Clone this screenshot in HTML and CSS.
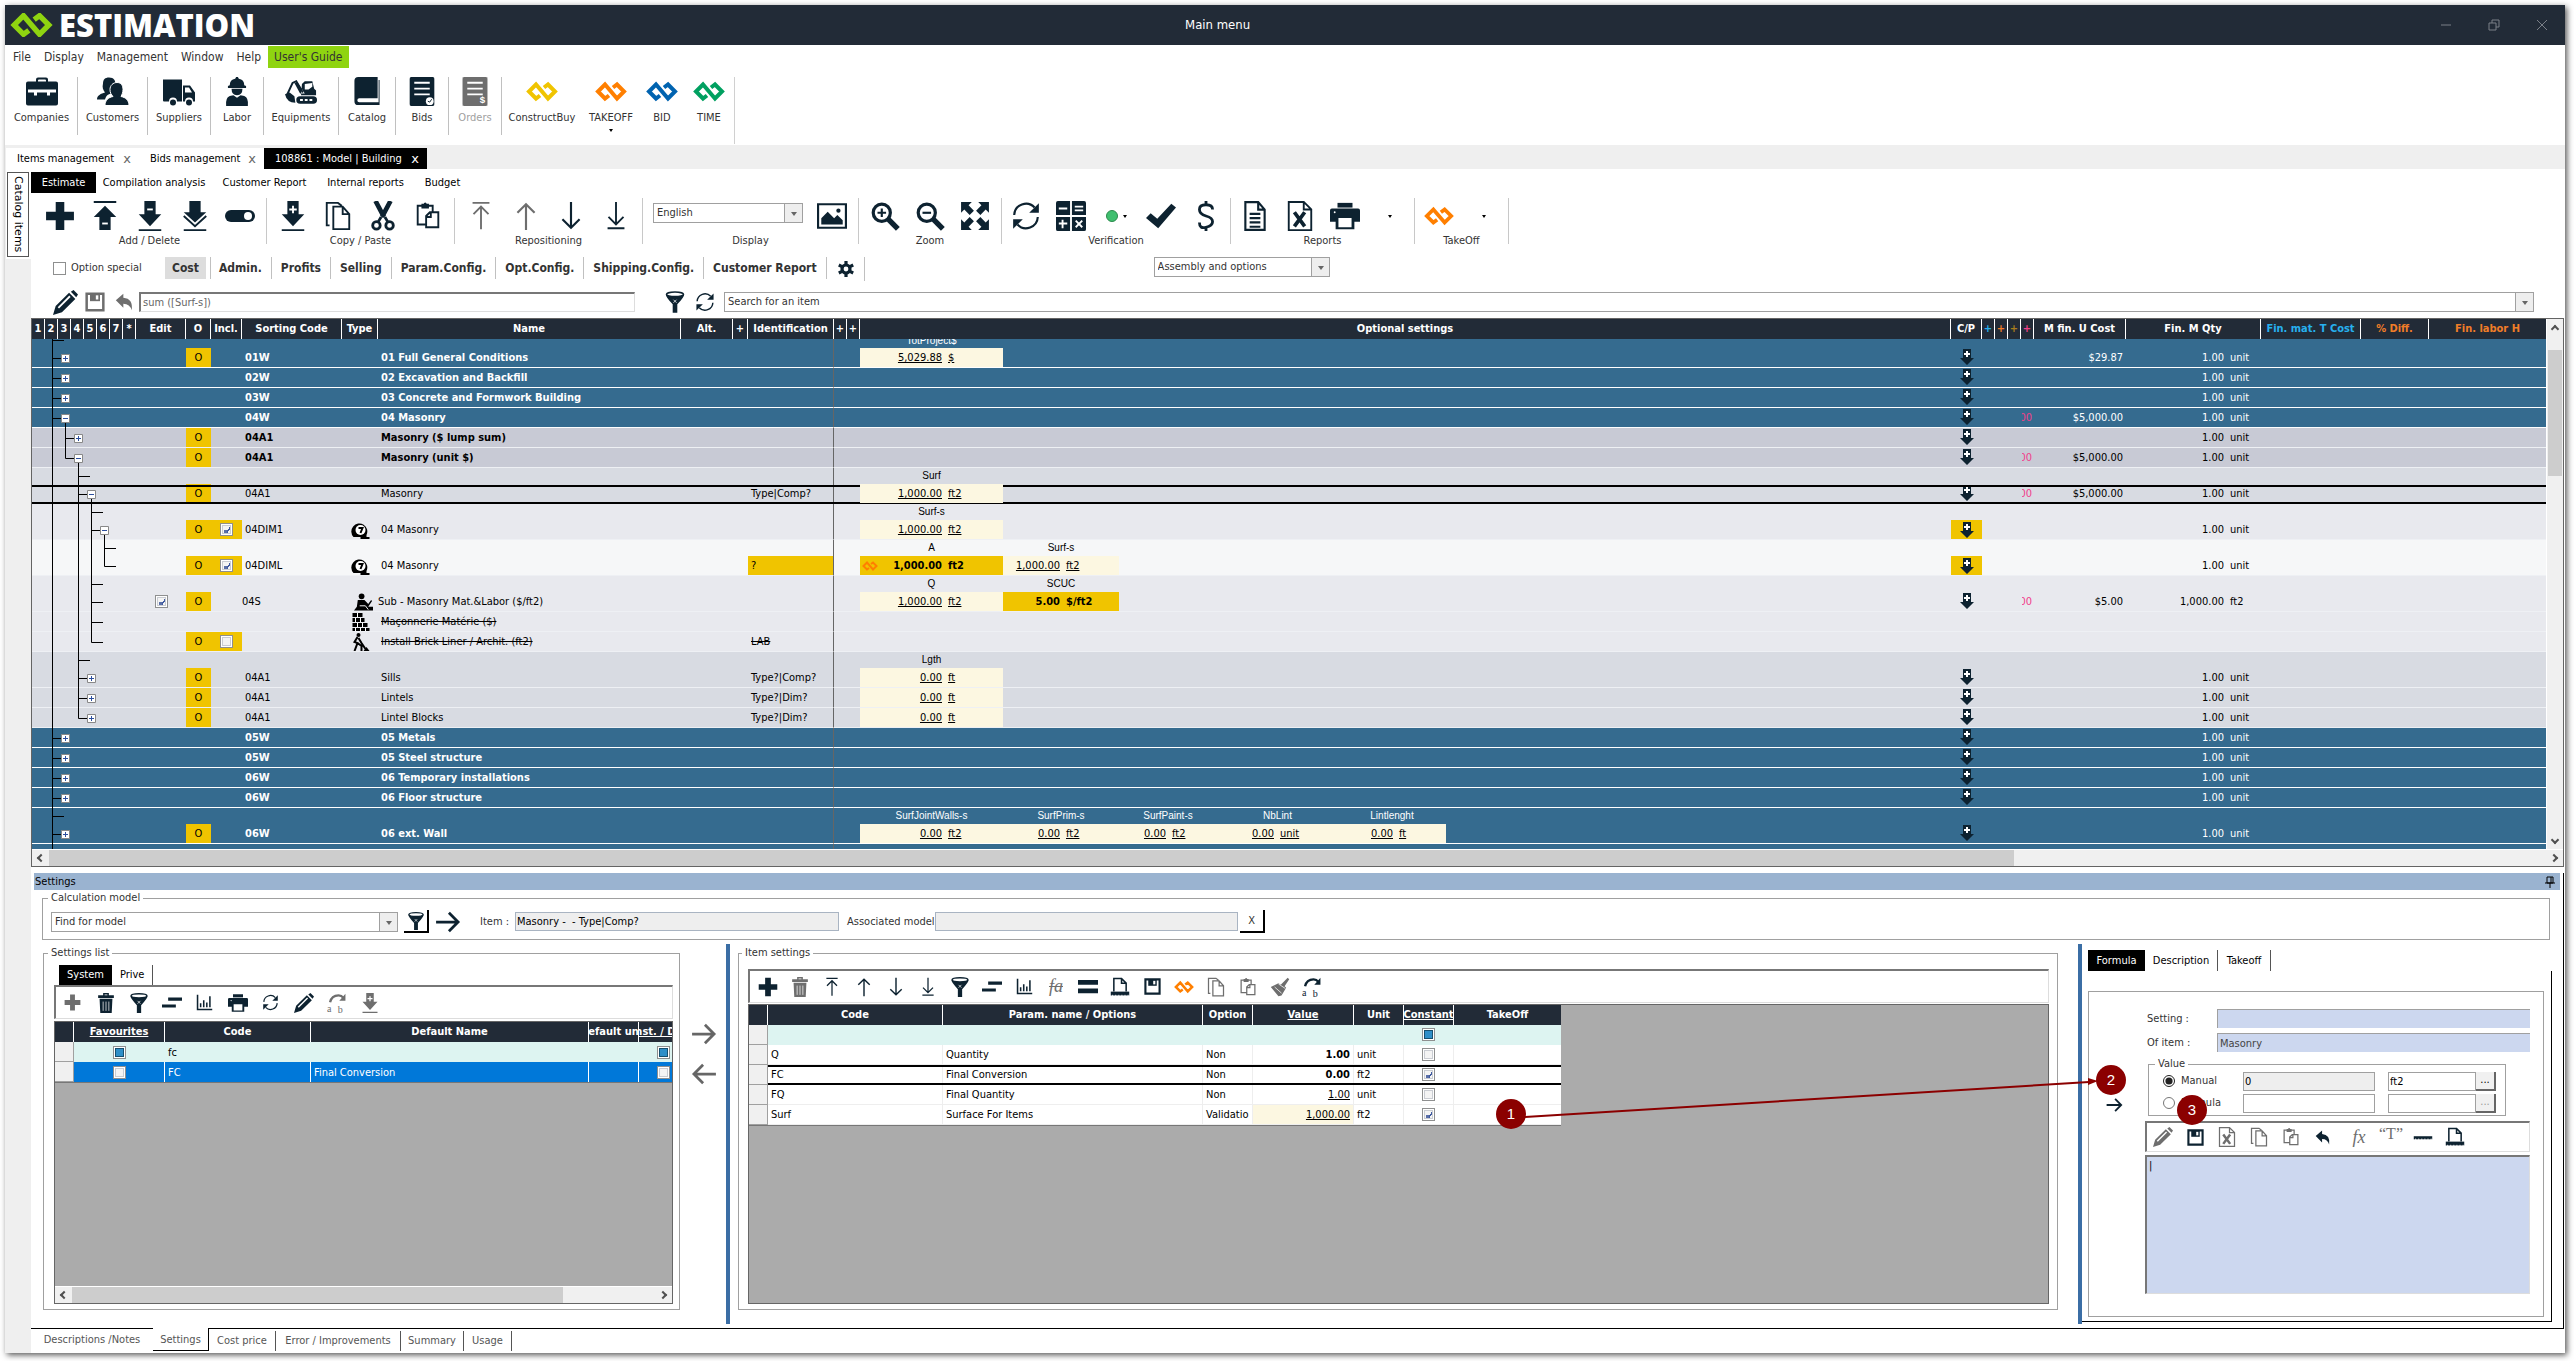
FILE: index.html
```html
<!DOCTYPE html>
<html lang="en">
<head>
<meta charset="utf-8">
<title>Estimation - Main menu</title>
<link rel="stylesheet" href="styles.css">
</head>
<body>
<svg class="defs" aria-hidden="true">
  <symbol id="knot" viewBox="0 0 32 18"><path d="M14 13l-4 3-7-7 7-7 12 14 7-7-7-7-4 3" fill="none" stroke="currentColor" stroke-width="4"/></symbol>
  <symbol id="case" viewBox="0 0 32 28"><path d="M10 5V2a2 2 0 0 1 2-2h8a2 2 0 0 1 2 2v3h-2V3q0-1-1-1h-6q-1 0-1 1v2z"/><path fill-rule="evenodd" d="M2 4h28a2 2 0 0 1 2 2v20a2 2 0 0 1-2 2H2a2 2 0 0 1-2-2V6a2 2 0 0 1 2-2zM2 12v3h6v3h3v-3h10v3h3v-3h6v-3z"/></symbol>
  <symbol id="people" viewBox="0 0 32 28"><path d="M12 0c5 0 7 3 6 8-3 1-5 4-4 8-4 1-5 3-6 6H0c0-4 4-6 8-7-2-3-3-5-2-9 0-4 2-6 6-6z"/><path d="M20 5c4 0 6 3 6 7 0 3-1 5-2 7 5 1 8 4 8 9H8c0-5 3-8 8-9-2-2-3-4-3-7 0-4 3-7 7-7z" stroke="#fff" stroke-width="1"/></symbol>
  <symbol id="truck" viewBox="0 0 32 28"><path d="M0 2h19v22H14a4 4 0 0 0-8 0H1q-1 0-1-1z"/><path fill-rule="evenodd" d="M20 8h7l5 7v9h-2a4 4 0 0 0-8 0h-2zM22 10v5h7l-3-5z"/><circle cx="10" cy="25" r="3"/><circle cx="26" cy="25" r="3"/></symbol>
  <symbol id="worker" viewBox="0 0 28 32"><path d="M6 9q0-6 6-7l1-2h2l1 2q6 1 6 7l2 1v2H4v-2zM8 13h12q0 7-6 7t-6-7zM2 32q-1-9 4-11l4-1 4 3 4-3 4 1q5 2 4 11z"/></symbol>
  <symbol id="digger" viewBox="0 0 34 26"><path d="M2 17L8 4l4-2 7 12" fill="none" stroke="currentColor" stroke-width="2"/><path fill-rule="evenodd" d="M0 16l5-2 5 4 1 7q-9 0-11-9zM10 4l3-1 8 12h-5zM18 5l3-3h8l2 8 2 2v5H17zM21 5v6h4l4-3V4z"/><path d="M16 18h14a4 4 0 0 1 0 8H16a4 4 0 0 1 0-8z"/><path d="M16 22h15" stroke="#fff" stroke-width="2" stroke-dasharray="3 2"/></symbol>
  <symbol id="book" viewBox="0 0 26 30"><path fill-rule="evenodd" d="M4 0h20v22H5q-2 0-2 2t2 2h20V3h1v26H4q-4 0-4-4V4q0-4 4-4z"/></symbol>
  <symbol id="sheet" viewBox="0 0 26 30"><rect width="26" height="30" rx="2"/><path d="M5 6h16M5 12h16M5 18h16" stroke="#fff" stroke-width="2"/></symbol>
  <symbol id="plus" viewBox="0 0 28 28"><path d="M10 1h8v9h9v8h-9v9h-8v-9H1v-8h9z"/></symbol>
  <symbol id="upbar" viewBox="0 0 28 32"><path d="M2 0h24v2H2zM14 5l12 12h-6v14H8V17H2z"/><path d="M11 24h6" stroke="#fff" stroke-width="2"/></symbol>
  <symbol id="downminus" viewBox="0 0 28 32"><path d="M8 0h12v14h6L14 27 2 14h6zM2 30h24v2H2z"/><path d="M11 9h6" stroke="#fff" stroke-width="2"/></symbol>
  <symbol id="downdouble" viewBox="0 0 28 32"><path d="M8 0h12v12h6L14 23 2 12h6zM2 30h24v2H2z"/><path d="M2 16l12 11 12-11" fill="none" stroke="currentColor" stroke-width="2"/></symbol>
  <symbol id="downplus" viewBox="0 0 28 32"><path d="M8 0h12v14h6L14 27 2 14h6zM2 30h24v2H2z"/><path d="M10 9h8M14 5v8" stroke="#fff" stroke-width="2"/></symbol>
  <symbol id="toggle" viewBox="0 0 30 12"><rect width="30" height="12" rx="6"/><circle cx="23" cy="6" r="4" fill="#fff"/></symbol>
  <symbol id="copy" viewBox="0 0 28 32"><path d="M5 26H2V2h12l4 3M9 6h10l7 8v16H9zM19 6v8h7" fill="none" stroke="currentColor" stroke-width="2"/></symbol>
  <symbol id="cut" viewBox="0 0 28 32"><path d="M6 0l9 17M22 0l-9 17" stroke="currentColor" stroke-width="5" fill="none"/><path d="M12 17l-3 5M16 17l3 5" stroke="currentColor" stroke-width="3"/><circle cx="7" cy="26" r="4" fill="none" stroke="currentColor" stroke-width="3"/><circle cx="21" cy="26" r="4" fill="none" stroke="currentColor" stroke-width="3"/></symbol>
  <symbol id="paste" viewBox="0 0 28 32"><path d="M11 25H3V5h16v6M8 7V4h2q1-3 2 0h2v3zM12 16l4-4h9v16H12zM12 17h5v-5" fill="none" stroke="currentColor" stroke-width="2"/></symbol>
  <symbol id="arrowup" viewBox="0 0 24 28"><path d="M12 27V3M4 11l8-8 8 8" fill="none" stroke="currentColor" stroke-width="2"/></symbol>
  <symbol id="arrowtop" viewBox="0 0 24 32"><path d="M3 2h18M12 30V6M4 14l8-8 8 8" fill="none" stroke="currentColor" stroke-width="2"/></symbol>
  <symbol id="arrowdown" viewBox="0 0 24 28"><path d="M12 1v24M4 17l8 8 8-8" fill="none" stroke="currentColor" stroke-width="2"/></symbol>
  <symbol id="arrowbottom" viewBox="0 0 24 32"><path d="M3 29h18M12 1v24M4 17l8 8 8-8" fill="none" stroke="currentColor" stroke-width="2"/></symbol>
  <symbol id="arrowright" viewBox="0 0 28 24"><path d="M1 12h24M15 2l10 10-10 10" fill="none" stroke="currentColor" stroke-width="3"/></symbol>
  <symbol id="arrowleft" viewBox="0 0 28 24"><path d="M27 12H3M13 2L3 12l10 10" fill="none" stroke="currentColor" stroke-width="3"/></symbol>
  <symbol id="picture" viewBox="0 0 28 24"><path fill-rule="evenodd" d="M0 0h28v24H0zM2 2v20h24V2z"/><path d="M4 20v-6l6-6 6 6 3-3 5 5v4z"/><circle cx="20" cy="7" r="2"/></symbol>
  <symbol id="lens" viewBox="0 0 28 28"><circle cx="11" cy="11" r="8" fill="none" stroke="currentColor" stroke-width="3"/><path d="M17 17l9 9" stroke="currentColor" stroke-width="5"/></symbol>
  <symbol id="zoomin" viewBox="0 0 28 28"><use href="#lens"/><path d="M7 11h8M11 7v8" stroke="currentColor" stroke-width="2"/></symbol>
  <symbol id="zoomout" viewBox="0 0 28 28"><use href="#lens"/><path d="M7 11h8" stroke="currentColor" stroke-width="2"/></symbol>
  <symbol id="expand" viewBox="0 0 28 28"><path d="M1 1h10L8 4l5 5-4 4-5-5-3 3zM27 1v10l-3-3-5 5-4-4 5-5-3-3zM1 27V17l3 3 5-5 4 4-5 5 3 3zM27 27H17l3-3-5-5 4-4 5 5 3-3z"/></symbol>
  <symbol id="refresh" viewBox="0 0 28 28"><path d="M3 13A11 11 0 0 1 22 6M25 15A11 11 0 0 1 6 22" fill="none" stroke="currentColor" stroke-width="2"/><path d="M26 2v9h-9zM2 26v-9h9z"/></symbol>
  <symbol id="calc" viewBox="0 0 32 32"><path d="M0 2q0-2 2-2h13v15H0zM17 0h13q2 0 2 2v13H17zM0 17h15v15H2q-2 0-2-2zM17 17h15v13q0 2-2 2H17z"/><path d="M3 8h9M20 6h9M20 10h9M3 24h9M7 20v9M21 21l7 7M28 21l-7 7" stroke="#fff" stroke-width="2"/></symbol>
  <symbol id="check" viewBox="0 0 32 26"><path d="M0 15l5-5 7 6L27 0l5 4-19 22z"/></symbol>
  <symbol id="dollar" viewBox="0 0 20 32"><path d="M17 9q0-5-7-5t-7 5 7 7 7 6-7 6-7-5M10 0v5M10 27v5" fill="none" stroke="currentColor" stroke-width="3"/></symbol>
  <symbol id="doc" viewBox="0 0 24 28"><path d="M3 1h12l6 7v19H3zM15 1v7h6M7 12h10M7 16h10M7 20h10M7 24h10" fill="none" stroke="currentColor" stroke-width="2"/></symbol>
  <symbol id="excel" viewBox="0 0 28 32"><path d="M2 1h16l8 8v22H2zM18 1v8h8" fill="none" stroke="currentColor" stroke-width="2"/><path d="M8 12l11 15M19 12L8 27" stroke="currentColor" stroke-width="4"/></symbol>
  <symbol id="print" viewBox="0 0 32 28"><path d="M8 0h16v5H8z"/><path fill-rule="evenodd" d="M2 6h28q2 0 2 2v12h-6v8H6v-8H0V8q0-2 2-2zM9 16v10h14V16z"/><circle cx="5" cy="10" r="1" fill="#fff"/></symbol>
  <symbol id="gear" viewBox="0 0 20 20"><circle cx="10" cy="10" r="5" fill="none" stroke="currentColor" stroke-width="4"/><path d="M10 0v4M10 16v4M1 5l4 2M15 13l4 2M1 15l4-2M15 7l4-2" stroke="currentColor" stroke-width="4"/></symbol>
  <symbol id="pencil" viewBox="0 0 28 28"><path d="M20 2l3-2 5 5-2 3zM3 18L18 3l7 7L10 25l-10 3z"/><path d="M6 20L19 7" stroke="#fff" stroke-width="2"/></symbol>
  <symbol id="save" viewBox="0 0 24 24"><path d="M2 2h20v20H2z" fill="none" stroke="currentColor" stroke-width="3"/><path d="M6 2h12v9H6z"/><path d="M13 4h3v5h-3z" fill="#fff"/></symbol>
  <symbol id="undo" viewBox="0 0 24 24"><path d="M10 2v5q12 1 10 15-2-8-10-8v5L1 10z"/></symbol>
  <symbol id="funnel" viewBox="0 0 26 28"><path d="M1 4q0 4 9 13v11h6V17q9-9 9-13z"/><ellipse cx="13" cy="4" rx="11" ry="3" fill="#fff" stroke="currentColor" stroke-width="2"/><path d="M11 11l4 4M15 11l-4 4" stroke="#fff"/></symbol>
  <symbol id="trash" viewBox="0 0 24 28"><path fill-rule="evenodd" d="M8 0h8v3h7v4H1V3h7zM10 2v1h4V2zM3 8h18l-1 20H4z"/><path d="M8 12v13M12 12v13M16 12v13" stroke="#fff"/></symbol>
  <symbol id="bars" viewBox="0 0 26 20"><path d="M8 3h18v4H8zM0 12h18v4H0z"/></symbol>
  <symbol id="chart" viewBox="0 0 22 22"><path d="M2 1v19h19M6 17v-5M10 17V8M14 17v-6M18 17V3" fill="none" stroke="currentColor" stroke-width="2"/></symbol>
  <symbol id="equal" viewBox="0 0 26 20"><path d="M0 1h26v6H0zM0 12h26v6H0z"/></symbol>
  <symbol id="ruler" viewBox="0 0 26 26"><path d="M5 19V2h10l6 6v11M15 2v6h6" fill="none" stroke="currentColor" stroke-width="2"/><path d="M1 19h24v5H1z"/><path d="M3 24h21" stroke="#fff" stroke-width="2" stroke-dasharray="1 3"/></symbol>
  <symbol id="scale" viewBox="0 0 26 26"><path d="M1 12h24v4H1z"/><path d="M3 16h21" stroke="#fff" stroke-width="2" stroke-dasharray="1 3"/></symbol>
  <symbol id="brush" viewBox="0 0 26 26"><path d="M23 1l2 2-6 9 2 2-6 10-4 1L1 13l10-5 3 2z"/><path d="M6 13l9 8M11 9l9 6" stroke="#fff"/></symbol>
  <symbol id="swap" viewBox="0 0 26 26"><path d="M4 12Q6 3 15 3q4 0 6 3" fill="none" stroke="currentColor" stroke-width="3"/><path d="M24 1v9h-8z"/></symbol>
  <symbol id="cp" viewBox="0 0 14 16"><path d="M3 0h8v9h3l-7 7-7-7h3z" fill="#0d2230"/><path d="M4 5h6M7 2v6" stroke="#fff" stroke-width="2"/></symbol>
  <symbol id="tape" viewBox="0 0 18 18"><path d="M2 16a8 8 0 1 1 13-2v2h3v2H9v-2h2M3 18h5"/><circle cx="9" cy="9" r="5" fill="#fff"/><path d="M7 7h4l-2 5" fill="none" stroke="#000" stroke-width="2"/></symbol>
  <symbol id="mason" viewBox="0 0 20 18"><circle cx="8" cy="3" r="3"/><path d="M4 7h7l4 4 3-4 1 1-4 6h5v4H0l3-4z"/><path d="M6 13h6l3 4" stroke="#fff" fill="none"/></symbol>
  <symbol id="brick" viewBox="0 0 18 18"><path d="M1 0h10v4H1zM1 5h12v4H1zM1 10h15v4H1zM1 15h17v3H1z"/><path d="M6 0v4M4 5v4M9 5v4M6 10v4M11 10v4M4 15v3M9 15v3M14 15v3" stroke="#fff"/></symbol>
  <symbol id="dig" viewBox="0 0 18 18"><circle cx="7" cy="2" r="2"/><path d="M6 4l-3 5 3 1-3 8M7 5l3 5 4 6M6 10l4 3v5" fill="none" stroke="currentColor" stroke-width="2"/><path d="M12 18l3-4 3 4z"/></symbol>
</svg>

<div class="app">
<header class="titlebar">
  <svg class="brand-mark"><use href="#knot"/></svg>
  <h1>ESTIMATION</h1>
  <span class="window-title">Main menu</span>
  <div class="window-controls">
    <button aria-label="Minimize"><svg width="12" height="12"><path d="M1 6h10"/></svg></button>
    <button aria-label="Restore"><svg width="12" height="12"><path d="M1 4h7v7H1zM4 4V1h7v7H8"/></svg></button>
    <button aria-label="Close"><svg width="12" height="12"><path d="M1 1l10 10M11 1L1 11"/></svg></button>
  </div>
</header>

<nav class="menu"><a href="#">File</a><a href="#">Display</a><a href="#">Management</a><a href="#">Window</a><a href="#">Help</a><a href="#" class="guide">User's Guide</a></nav>

<div class="ribbon">
  <button class="w72"><svg><use href="#case"/></svg>Companies</button>
  <button class="w70"><svg><use href="#people"/></svg>Customers</button>
  <button class="w63"><svg><use href="#truck"/></svg>Suppliers</button>
  <button class="w53"><svg><use href="#worker"/></svg>Labor</button>
  <button class="w75"><svg><use href="#digger"/></svg>Equipments</button>
  <button class="w57"><svg><use href="#book"/></svg>Catalog</button>
  <button class="w53"><svg viewBox="0 0 26 30"><use href="#sheet"/><circle cx="21" cy="25" r="4" fill="#fff"/><path d="M19 25l2 1 2-3" fill="none" stroke="#0d2230"/></svg>Bids</button>
  <button class="w53" disabled><svg class="shade" viewBox="0 0 26 30"><use href="#sheet"/><text x="18" y="27" class="tiny">$</text></svg>Orders</button>
  <div class="ribbon-apps">
    <button class="w80"><svg class="gold"><use href="#knot"/></svg>ConstructBuy</button>
    <button class="w58"><svg class="orange"><use href="#knot"/></svg>TAKEOFF<i class="caret"></i></button>
    <button class="w44"><svg class="blue"><use href="#knot"/></svg>BID</button>
    <button class="w50"><svg class="green"><use href="#knot"/></svg>TIME</button>
  </div>
</div>

<div class="doc-tabs">
  <div class="doc-tab t133"><a href="#">Items management</a><button aria-label="Close tab">x</button></div>
  <div class="doc-tab t125"><a href="#">Bids management</a><button aria-label="Close tab">x</button></div>
  <div class="doc-tab t163 active"><a href="#">108861 : Model | Building</a><button aria-label="Close tab">x</button></div>
</div>

<div class="body">
<aside class="gutter"><div><button>Catalog items</button></div></aside>
<main class="work">
  <nav class="sub-tabs"><a href="#" class="active t65">Estimate</a><a href="#" class="t116">Compilation analysis</a><a href="#" class="t105">Customer Report</a><a href="#" class="t97">Internal reports</a><a href="#" class="t57">Budget</a></nav>

  <div class="tools">
    <section class="g234"><div>
      <button aria-label="Add"><svg><use href="#plus"/></svg></button><button aria-label="Insert above"><svg><use href="#upbar"/></svg></button><button aria-label="Insert below"><svg><use href="#downminus"/></svg></button><button aria-label="Insert child"><svg><use href="#downdouble"/></svg></button><button aria-label="Toggle"><svg><use href="#toggle"/></svg></button></div><h2>Add / Delete</h2></section>
    <section class="g188"><div>
      <button aria-label="Import"><svg><use href="#downplus"/></svg></button><button aria-label="Copy"><svg><use href="#copy"/></svg></button><button aria-label="Cut"><svg><use href="#cut"/></svg></button><button aria-label="Paste"><svg><use href="#paste"/></svg></button></div><h2>Copy / Paste</h2></section>
    <section class="g188"><div>
      <button class="dim" aria-label="To top"><svg><use href="#arrowtop"/></svg></button><button class="dim" aria-label="Up"><svg><use href="#arrowup"/></svg></button><button aria-label="Down"><svg><use href="#arrowdown"/></svg></button><button aria-label="To bottom"><svg><use href="#arrowbottom"/></svg></button></div><h2>Repositioning</h2></section>
    <section class="g216"><div>
      <span class="select w150"><select aria-label="Language"><option>English</option></select></span><button aria-label="Picture"><svg><use href="#picture"/></svg></button></div><h2>Display</h2></section>
    <section class="g143"><div>
      <button aria-label="Zoom in"><svg><use href="#zoomin"/></svg></button><button aria-label="Zoom out"><svg><use href="#zoomout"/></svg></button><button aria-label="Fit"><svg><use href="#expand"/></svg></button></div><h2>Zoom</h2></section>
    <section class="g229"><div>
      <button aria-label="Refresh"><svg><use href="#refresh"/></svg></button><button aria-label="Calculate"><svg><use href="#calc"/></svg></button><button aria-label="Status"><i class="led"></i><i class="caret"></i></button><button aria-label="Validate"><svg><use href="#check"/></svg></button><button aria-label="Price"><svg><use href="#dollar"/></svg></button></div><h2>Verification</h2></section>
    <section class="g184"><div>
      <button aria-label="Document"><svg><use href="#doc"/></svg></button><button aria-label="Excel"><svg><use href="#excel"/></svg></button><button aria-label="Print"><svg><use href="#print"/></svg></button><button aria-label="More"><i class="caret"></i></button></div><h2>Reports</h2></section>
    <section class="g94"><div>
      <button class="orange" aria-label="TakeOff"><svg><use href="#knot"/></svg></button><button aria-label="More"><i class="caret"></i></button></div><h2>TakeOff</h2></section>
  </div>

  <div class="config">
    <label class="opt"><input type="checkbox">Option special</label>
    <nav><a href="#" class="active">Cost</a><a href="#">Admin.</a><a href="#">Profits</a><a href="#">Selling</a><a href="#">Param.Config.</a><a href="#">Opt.Config.</a><a href="#">Shipping.Config.</a><a href="#">Customer Report</a></nav>
    <button class="cog" aria-label="Configure"><svg><use href="#gear"/></svg></button>
    <span class="select w176"><select aria-label="View"><option>Assembly and options</option></select></span>
  </div>

  <div class="formula">
    <button aria-label="Edit"><svg><use href="#pencil"/></svg></button><button class="dim" aria-label="Save"><svg><use href="#save"/></svg></button><button class="dim" aria-label="Undo"><svg><use href="#undo"/></svg></button>
    <input class="expr" aria-label="Formula" value="sum ([Surf-s])">
    <button class="filter" aria-label="Filter"><svg><use href="#funnel"/></svg></button><button aria-label="Refresh"><svg><use href="#refresh"/></svg></button>
    <span class="select grow"><select aria-label="Search"><option>Search for an item</option></select></span>
  </div>

  <div class="grid-box">
    <div class="grid-view">
      <div class="grid-clip">
      <table class="grid">
        <colgroup><col class="c13" span="8"><col class="c50"><col class="c25"><col class="c31"><col class="c100"><col class="c36"><col class="c303"><col class="c52"><col class="c15"><col class="c86"><col class="c13" span="2"><col><col class="c31"><col class="c13" span="4"><col class="c92"><col class="c135"><col class="c100"><col class="c68"><col class="c117"></colgroup>
        <thead><tr><th>1</th><th>2</th><th>3</th><th>4</th><th>5</th><th>6</th><th>7</th><th>*</th><th>Edit</th><th>O</th><th>Incl.</th><th>Sorting Code</th><th>Type</th><th>Name</th><th>Alt.</th><th>+</th><th>Identification</th><th>+</th><th>+</th><th>Optional settings</th><th>C/P</th><th class="cyan">+</th><th class="amber">+</th><th class="olive">+</th><th class="pink">+</th><th>M fin. U Cost</th><th>Fin. M Qty</th><th class="cyan">Fin. mat. T Cost</th><th class="amber">% Diff.</th><th class="amber">Fin. labor H</th></tr></thead>
        <tbody>
        <tr class="l2 cut"><td colspan="9"></td><td><div class="y">O</div></td><td></td><td class="b">01W</td><td></td><td class="b">01 Full General Conditions</td><td colspan="2"></td><td class="id"></td><td colspan="2"></td><td><div class="ps"><div class="p p1"><small>TotProject$</small><p><u>5,029.88</u><u>$</u></p></div></div></td><td class="cp"><svg><use href="#cp"/></svg></td><td colspan="3"></td><td></td><td class="n">$29.87</td><td class="q"><span>1.00</span>unit</td><td colspan="3"></td></tr>
        <tr class="l2"><td colspan="9"></td><td></td><td></td><td class="b">02W</td><td></td><td class="b">02 Excavation and Backfill</td><td colspan="2"></td><td class="id"></td><td colspan="2"></td><td></td><td class="cp"><svg><use href="#cp"/></svg></td><td colspan="3"></td><td></td><td class="n"></td><td class="q"><span>1.00</span>unit</td><td colspan="3"></td></tr>
        <tr class="l2"><td colspan="9"></td><td></td><td></td><td class="b">03W</td><td></td><td class="b">03 Concrete and Formwork Building</td><td colspan="2"></td><td class="id"></td><td colspan="2"></td><td></td><td class="cp"><svg><use href="#cp"/></svg></td><td colspan="3"></td><td></td><td class="n"></td><td class="q"><span>1.00</span>unit</td><td colspan="3"></td></tr>
        <tr class="l2"><td colspan="9"></td><td></td><td></td><td class="b">04W</td><td></td><td class="b">04 Masonry</td><td colspan="2"></td><td class="id"></td><td colspan="2"></td><td></td><td class="cp"><svg><use href="#cp"/></svg></td><td colspan="3"></td><td class="pk"><span>00</span></td><td class="n">$5,000.00</td><td class="q"><span>1.00</span>unit</td><td colspan="3"></td></tr>
        <tr class="l3"><td colspan="9"></td><td><div class="y">O</div></td><td></td><td class="b">04A1</td><td></td><td class="b">Masonry ($ lump sum)</td><td colspan="2"></td><td class="id"></td><td colspan="2"></td><td></td><td class="cp"><svg><use href="#cp"/></svg></td><td colspan="3"></td><td></td><td class="n"></td><td class="q"><span>1.00</span>unit</td><td colspan="3"></td></tr>
        <tr class="l3"><td colspan="9"></td><td><div class="y">O</div></td><td></td><td class="b">04A1</td><td></td><td class="b">Masonry (unit $)</td><td colspan="2"></td><td class="id"></td><td colspan="2"></td><td></td><td class="cp"><svg><use href="#cp"/></svg></td><td colspan="3"></td><td class="pk"><span>00</span></td><td class="n">$5,000.00</td><td class="q"><span>1.00</span>unit</td><td colspan="3"></td></tr>
        <tr class="l4 tall current"><td colspan="9"></td><td><div class="y">O</div></td><td></td><td>04A1</td><td></td><td>Masonry</td><td colspan="2"></td><td class="id">Type|Comp?</td><td colspan="2"></td><td><div class="ps"><div class="p p1"><small>Surf</small><p><u>1,000.00</u><u>ft2</u></p></div></div></td><td class="cp"><svg><use href="#cp"/></svg></td><td colspan="3"></td><td class="pk"><span>00</span></td><td class="n">$5,000.00</td><td class="q"><span>1.00</span>unit</td><td colspan="3"></td></tr>
        <tr class="l5 tall"><td colspan="9"></td><td><div class="y">O</div></td><td><div class="y"><input type="checkbox" aria-label="Included" checked></div></td><td>04DIM1</td><td class="ty"><svg><use href="#tape"/></svg></td><td>04 Masonry</td><td colspan="2"></td><td class="id"></td><td colspan="2"></td><td><div class="ps"><div class="p p1"><small>Surf-s</small><p><u>1,000.00</u><u>ft2</u></p></div></div></td><td class="cp"><div class="y"><svg><use href="#cp"/></svg></div></td><td colspan="3"></td><td></td><td class="n"></td><td class="q"><span>1.00</span>unit</td><td colspan="3"></td></tr>
        <tr class="l6 tall"><td colspan="9"></td><td><div class="y">O</div></td><td><div class="y"><input type="checkbox" aria-label="Included" checked></div></td><td>04DIML</td><td class="ty"><svg><use href="#tape"/></svg></td><td>04 Masonry</td><td colspan="2"></td><td class="id"><div class="y">?</div></td><td colspan="2"></td><td><div class="ps"><div class="p p1 hot"><small>A</small><p><svg class="mark"><use href="#knot"/></svg><b>1,000.00</b><b>ft2</b></p></div><div class="p p2"><small>Surf-s</small><p><u>1,000.00</u><u>ft2</u></p></div></div></td><td class="cp"><div class="y"><svg><use href="#cp"/></svg></div></td><td colspan="3"></td><td></td><td class="n"></td><td class="q"><span>1.00</span>unit</td><td colspan="3"></td></tr>
        <tr class="l5 tall edits"><td colspan="8"></td><td class="ed"><input type="checkbox" aria-label="Edit" checked></td><td><div class="y">O</div></td><td></td><td>04S</td><td class="ty"><svg><use href="#mason"/></svg></td><td>Sub - Masonry Mat.&amp;Labor ($/ft2)</td><td colspan="2"></td><td class="id"></td><td colspan="2"></td><td><div class="ps"><div class="p p1"><small>Q</small><p><u>1,000.00</u><u>ft2</u></p></div><div class="p p2 hot"><small>SCUC</small><p><b>5.00</b><b>$/ft2</b></p></div></div></td><td class="cp"><svg><use href="#cp"/></svg></td><td colspan="3"></td><td class="pk"><span>00</span></td><td class="n">$5.00</td><td class="q"><span>1,000.00</span>ft2</td><td colspan="3"></td></tr>
        <tr class="l5"><td colspan="9"></td><td></td><td></td><td></td><td class="ty"><svg><use href="#brick"/></svg></td><td><s>Maçonnerie Matérie ($)</s></td><td colspan="2"></td><td class="id"></td><td colspan="2"></td><td></td><td></td><td colspan="3"></td><td></td><td></td><td></td><td colspan="3"></td></tr>
        <tr class="l5"><td colspan="9"></td><td><div class="y">O</div></td><td><div class="y"><input type="checkbox" aria-label="Included"></div></td><td></td><td class="ty"><svg><use href="#dig"/></svg></td><td><s>Install Brick Liner / Archit. (ft2)</s></td><td colspan="2"></td><td class="id"><s>LAB</s></td><td colspan="2"></td><td></td><td></td><td colspan="3"></td><td></td><td></td><td></td><td colspan="3"></td></tr>
        <tr class="l4 tall"><td colspan="9"></td><td><div class="y">O</div></td><td></td><td>04A1</td><td></td><td>Sills</td><td colspan="2"></td><td class="id">Type?|Comp?</td><td colspan="2"></td><td><div class="ps"><div class="p p1"><small>Lgth</small><p><u>0.00</u><u>ft</u></p></div></div></td><td class="cp"><svg><use href="#cp"/></svg></td><td colspan="3"></td><td></td><td class="n"></td><td class="q"><span>1.00</span>unit</td><td colspan="3"></td></tr>
        <tr class="l4"><td colspan="9"></td><td><div class="y">O</div></td><td></td><td>04A1</td><td></td><td>Lintels</td><td colspan="2"></td><td class="id">Type?|Dim?</td><td colspan="2"></td><td><div class="ps"><div class="p p1"><p><u>0.00</u><u>ft</u></p></div></div></td><td class="cp"><svg><use href="#cp"/></svg></td><td colspan="3"></td><td></td><td class="n"></td><td class="q"><span>1.00</span>unit</td><td colspan="3"></td></tr>
        <tr class="l4"><td colspan="9"></td><td><div class="y">O</div></td><td></td><td>04A1</td><td></td><td>Lintel Blocks</td><td colspan="2"></td><td class="id">Type?|Dim?</td><td colspan="2"></td><td><div class="ps"><div class="p p1"><p><u>0.00</u><u>ft</u></p></div></div></td><td class="cp"><svg><use href="#cp"/></svg></td><td colspan="3"></td><td></td><td class="n"></td><td class="q"><span>1.00</span>unit</td><td colspan="3"></td></tr>
        <tr class="l2"><td colspan="9"></td><td></td><td></td><td class="b">05W</td><td></td><td class="b">05 Metals</td><td colspan="2"></td><td class="id"></td><td colspan="2"></td><td></td><td class="cp"><svg><use href="#cp"/></svg></td><td colspan="3"></td><td></td><td class="n"></td><td class="q"><span>1.00</span>unit</td><td colspan="3"></td></tr>
        <tr class="l2"><td colspan="9"></td><td></td><td></td><td class="b">05W</td><td></td><td class="b">05 Steel structure</td><td colspan="2"></td><td class="id"></td><td colspan="2"></td><td></td><td class="cp"><svg><use href="#cp"/></svg></td><td colspan="3"></td><td></td><td class="n"></td><td class="q"><span>1.00</span>unit</td><td colspan="3"></td></tr>
        <tr class="l2"><td colspan="9"></td><td></td><td></td><td class="b">06W</td><td></td><td class="b">06 Temporary installations</td><td colspan="2"></td><td class="id"></td><td colspan="2"></td><td></td><td class="cp"><svg><use href="#cp"/></svg></td><td colspan="3"></td><td></td><td class="n"></td><td class="q"><span>1.00</span>unit</td><td colspan="3"></td></tr>
        <tr class="l2"><td colspan="9"></td><td></td><td></td><td class="b">06W</td><td></td><td class="b">06 Floor structure</td><td colspan="2"></td><td class="id"></td><td colspan="2"></td><td></td><td class="cp"><svg><use href="#cp"/></svg></td><td colspan="3"></td><td></td><td class="n"></td><td class="q"><span>1.00</span>unit</td><td colspan="3"></td></tr>
        <tr class="l2 tall"><td colspan="9"></td><td><div class="y">O</div></td><td></td><td class="b">06W</td><td></td><td class="b">06 ext. Wall</td><td colspan="2"></td><td class="id"></td><td colspan="2"></td><td><div class="ps"><div class="p p1"><small>SurfJointWalls-s</small><p><u>0.00</u><u>ft2</u></p></div><div class="p p2"><small>SurfPrim-s</small><p><u>0.00</u><u>ft2</u></p></div><div class="p p3"><small>SurfPaint-s</small><p><u>0.00</u><u>ft2</u></p></div><div class="p p4"><small>NbLint</small><p><u>0.00</u><u>unit</u></p></div><div class="p p5"><small>Lintlenght</small><p><u>0.00</u><u>ft</u></p></div></div></td><td class="cp"><svg><use href="#cp"/></svg></td><td colspan="3"></td><td></td><td class="n"></td><td class="q"><span>1.00</span>unit</td><td colspan="3"></td></tr>
        <tr class="l2 sliver"><td colspan="16"></td><td class="id"></td><td colspan="13"></td></tr>
        </tbody>
      </table>
      <svg class="tree" width="104" height="510" aria-hidden="true">
        <path fill="none" stroke="#000" d="M20.5 0V510M20 1.500H32M20 19.500H29M20 39.500H29M20 59.500H29M20 79.500H29M33.500 84V119.500H42M33 99.500H42M46.500 124V379.500H55M46 137.500H58M46 155.500H55M46 321.500H58M46 339.500H55M46 359.500H55M59.500 160V303.500H71M59 173.500H71M59 191.500H68M59 245.500H71M59 263.500H71M59 283.500H71M72.500 196V227.500H84M72 209.500H84M20 399.500H29M20 419.500H29M20 439.500H29M20 459.500H29M20 477.500H32M20 495.500H29"/>
        <path fill="#fff" stroke="#888" d="M29.500 15.500h8v8h-8zM29.500 35.500h8v8h-8zM29.500 55.500h8v8h-8zM29.500 75.500h8v8h-8zM42.500 95.500h8v8h-8zM42.500 115.500h8v8h-8zM55.500 151.500h8v8h-8zM68.500 187.500h8v8h-8zM55.500 335.500h8v8h-8zM55.500 355.500h8v8h-8zM55.500 375.500h8v8h-8zM29.500 395.500h8v8h-8zM29.500 415.500h8v8h-8zM29.500 435.500h8v8h-8zM29.500 455.500h8v8h-8zM29.500 491.500h8v8h-8z"/>
        <path fill="none" stroke="#2d4f9e" d="M31 19.500h5m-2.500-2.500v5M31 39.500h5m-2.500-2.500v5M31 59.500h5m-2.500-2.500v5M31 79.500h5M44 99.500h5m-2.500-2.500v5M44 119.500h5M57 155.500h5M70 191.500h5M57 339.500h5m-2.500-2.500v5M57 359.500h5m-2.500-2.500v5M57 379.500h5m-2.500-2.500v5M31 399.500h5m-2.500-2.500v5M31 419.500h5m-2.500-2.500v5M31 439.500h5m-2.500-2.500v5M31 459.500h5m-2.500-2.500v5M31 495.500h5m-2.500-2.500v5"/>
      </svg>
      </div>
      <div class="vscroll"><i class="chev up"></i><div class="vthumb"></div><i class="chev down"></i></div>
    </div>
    <div class="hscroll"><i class="chev left"></i><div class="hthumb main"></div><i class="chev right"></i></div>
  </div>

  <section class="settings">
    <h2 class="bar">Settings<svg width="12" height="12"><path d="M3 1h6v6H3zM7 1v6M1 7h10M6 7v5" fill="none" stroke="#000"/></svg></h2>
    <fieldset class="model"><legend>Calculation model</legend>
      <div class="row">
        <span class="select w347"><select aria-label="Find for model"><option>Find for model</option></select></span>
        <button class="raised" aria-label="Filter"><svg><use href="#funnel"/></svg></button>
        <button class="go" aria-label="Apply"><svg><use href="#arrowright"/></svg></button>
        <label for="item">Item :</label><input id="item" class="item" value="Masonry -  - Type|Comp?" readonly>
        <label for="assoc" class="assoc">Associated model</label><input id="assoc" class="model-name" readonly>
        <button class="raised x">X</button>
      </div>
    </fieldset>

    <div class="columns">
      <fieldset class="group list"><legend>Settings list</legend>
        <nav class="tabs"><a href="#" class="active">System</a><a href="#">Prive</a></nav>
        <div class="strip">
          <button class="dim" aria-label="Add"><svg class="s"><use href="#plus"/></svg></button><button aria-label="Delete"><svg><use href="#trash"/></svg></button><button aria-label="Filter"><svg><use href="#funnel"/></svg></button><button aria-label="Group"><svg><use href="#bars"/></svg></button><button aria-label="Chart"><svg class="s"><use href="#chart"/></svg></button><button aria-label="Print"><svg><use href="#print"/></svg></button><button aria-label="Refresh"><svg class="s"><use href="#refresh"/></svg></button><button aria-label="Edit"><svg><use href="#pencil"/></svg></button><button class="dim" aria-label="Replace"><svg viewBox="0 0 26 26"><use href="#swap"/><text x="0" y="25" class="ab">a</text><text x="14" y="26" class="ab">b</text></svg></button><button class="dim" aria-label="Import"><svg><use href="#downplus"/></svg></button>
        </div>
        <div class="table-box">
          <table class="mini full">
            <colgroup><col class="c19"><col class="c90"><col class="c146"><col><col class="c50"><col class="c33"></colgroup>
            <thead><tr><th></th><th><u>Favourites</u></th><th>Code</th><th>Default Name</th><th class="clip"><span>Default unit</span></th><th class="clip"><span><u>Const. / Def.</u></span></th></tr></thead>
            <tbody>
              <tr class="filter-row"><td class="rh"></td><td class="c"><input type="checkbox" class="mixed" aria-label="Favourites filter"></td><td>fc</td><td></td><td></td><td class="r"><input type="checkbox" class="mixed" aria-label="Constant filter"></td></tr>
              <tr class="sel"><td class="rh"></td><td class="c"><input type="checkbox" aria-label="Favourite"></td><td>FC</td><td>Final Conversion</td><td></td><td class="r"><input type="checkbox" aria-label="Constant"></td></tr>
            </tbody>
          </table>
          <div class="hscroll"><i class="chev left"></i><div class="hthumb side"></div><i class="chev right"></i></div>
        </div>
      </fieldset>
      <div class="move"><button aria-label="Add to item"><svg><use href="#arrowright"/></svg></button><button aria-label="Remove from item"><svg><use href="#arrowleft"/></svg></button></div>
      <div class="splitter"></div>
      <fieldset class="group items"><legend>Item settings</legend>
        <div class="strip tight">
          <button aria-label="Add"><svg><use href="#plus"/></svg></button><button class="dim" aria-label="Delete"><svg><use href="#trash"/></svg></button><button aria-label="To top"><svg><use href="#arrowtop"/></svg></button><button aria-label="Up"><svg><use href="#arrowup"/></svg></button><button aria-label="Down"><svg><use href="#arrowdown"/></svg></button><button aria-label="To bottom"><svg><use href="#arrowbottom"/></svg></button><button aria-label="Filter"><svg><use href="#funnel"/></svg></button><button aria-label="Group"><svg><use href="#bars"/></svg></button><button aria-label="Chart"><svg class="s"><use href="#chart"/></svg></button><button class="dim fx"><s>fa</s></button><button aria-label="Equal"><svg><use href="#equal"/></svg></button><button aria-label="Measure"><svg><use href="#ruler"/></svg></button><button aria-label="Save"><svg class="s"><use href="#save"/></svg></button><button class="orange" aria-label="Takeoff"><svg><use href="#knot"/></svg></button><button class="dim" aria-label="Copy"><svg><use href="#copy"/></svg></button><button class="dim" aria-label="Paste"><svg><use href="#paste"/></svg></button><button class="dim" aria-label="Brush"><svg><use href="#brush"/></svg></button><button aria-label="Replace"><svg viewBox="0 0 26 26"><use href="#swap"/><text x="0" y="25" class="ab">a</text><text x="14" y="26" class="ab">b</text></svg></button>
        </div>
        <div class="table-box">
          <table class="mini">
            <colgroup><col class="c19"><col class="c175"><col class="c260"><col class="c50"><col class="c101"><col class="c50"><col class="c50"><col class="c107"></colgroup>
            <thead><tr><th></th><th>Code</th><th>Param. name / Options</th><th>Option</th><th><u>Value</u></th><th>Unit</th><th class="clip"><span><u>Constant</u></span></th><th>TakeOff</th></tr></thead>
            <tbody class="lined">
              <tr class="filter-row"><td class="rh"></td><td></td><td></td><td></td><td></td><td></td><td class="c"><input type="checkbox" class="mixed" aria-label="Constant filter"></td><td></td></tr>
              <tr><td class="rh"></td><td>Q</td><td>Quantity</td><td>Non</td><td class="r"><b>1.00</b></td><td>unit</td><td class="c"><input type="checkbox" aria-label="Constant"></td><td></td></tr>
              <tr class="current"><td class="rh"></td><td>FC</td><td>Final Conversion</td><td>Non</td><td class="r"><b>0.00</b></td><td>ft2</td><td class="c"><input type="checkbox" aria-label="Constant" checked></td><td></td></tr>
              <tr><td class="rh"></td><td>FQ</td><td>Final Quantity</td><td>Non</td><td class="r"><u>1.00</u></td><td>unit</td><td class="c"><input type="checkbox" aria-label="Constant"></td><td></td></tr>
              <tr><td class="rh"></td><td>Surf</td><td>Surface For Items</td><td>Validatio</td><td class="r cream"><u>1,000.00</u></td><td>ft2</td><td class="c"><input type="checkbox" aria-label="Constant" checked></td><td></td></tr>
            </tbody>
          </table>
        </div>
      </fieldset>
      <div class="splitter"></div>
      <section class="detail">
        <nav class="tabs"><a href="#" class="active t57">Formula</a><a href="#" class="t73">Description</a><a href="#" class="t53">Takeoff</a></nav>
        <div class="detail-frame"><div class="detail-inner">
          <button class="send" aria-label="Send"><svg><use href="#arrowright"/></svg></button>
          <div class="form">
            <div class="field"><label for="setting">Setting :</label><input id="setting"></div>
            <div class="field"><label for="ofitem">Of item :</label><input id="ofitem" value="Masonry"></div>
            <fieldset class="value"><legend>Value</legend>
              <div class="row"><label><input type="radio" name="kind" checked>Manual</label><input class="amount" aria-label="Manual value" value="0" readonly><input class="unit" aria-label="Manual unit" value="ft2"><button class="dots">...</button></div>
              <div class="row"><label><input type="radio" name="kind">Formula</label><input class="amount" aria-label="Formula value"><input class="unit" aria-label="Formula unit"><button class="dots" disabled>...</button></div>
            </fieldset>
            <div class="strip wide">
              <button class="dim" aria-label="Edit"><svg><use href="#pencil"/></svg></button><button aria-label="Save"><svg class="s"><use href="#save"/></svg></button><button class="dim" aria-label="Excel"><svg><use href="#excel"/></svg></button><button class="dim" aria-label="Copy"><svg><use href="#copy"/></svg></button><button class="dim" aria-label="Paste"><svg><use href="#paste"/></svg></button><button aria-label="Undo"><svg class="s"><use href="#undo"/></svg></button><button class="dim fx push">fx</button><button class="dim quote">“T”</button><button aria-label="Scale"><svg><use href="#scale"/></svg></button><button aria-label="Ruler"><svg><use href="#ruler"/></svg></button>
            </div>
            <textarea aria-label="Formula text">|</textarea>
          </div>
        </div></div>
      </section>
    </div>

    <svg class="notes" aria-hidden="true">
      <path d="M1494 244L2058 209" stroke="#8b0000" stroke-width="2"/>
      <path d="M2067 208l-10-3v7z"/>
      <circle cx="1480" cy="241" r="15"/><circle cx="2080" cy="207" r="15"/><circle cx="2161" cy="237" r="15"/>
      <text x="1480" y="246">1</text><text x="2080" y="212">2</text><text x="2161" y="242">3</text>
    </svg>
  </section>

  <nav class="bottom-tabs"><a href="#" class="t122">Descriptions /Notes</a><a href="#" class="active t56">Settings</a><a href="#" class="t67">Cost price</a><a href="#" class="t125">Error / Improvements</a><a href="#" class="t63">Summary</a><a href="#" class="t48">Usage</a></nav>
</main>
</div>
</div>
</body>
</html>
```
FILE: styles.css
```css
* { box-sizing: border-box; }
body {
  margin: 0;
  padding: 5px 9px 8px 5px;
  background: #fff;
  color: #333;
  font: 11px/14px "DejaVu Sans Condensed", "DejaVu Sans", sans-serif;
}
a { color: inherit; text-decoration: none; }
button, input, select, textarea { font: inherit; color: inherit; margin: 0; }
button { display: flex; align-items: center; justify-content: center; border: 0; padding: 0; background: none; color: #0d2230; }
h1, h2, p { margin: 0; font-weight: normal; }
svg { fill: currentColor; flex: none; }
fieldset { margin: 0; padding: 0; min-width: 0; border: 1px solid #a0a0a0; }
legend { margin-left: 5px; padding: 0 3px; line-height: 14px; }
.defs { position: absolute; width: 0; height: 0; }
.orange { color: #ff7f00 !important; }
.dim { color: #6e6e6e; }

.app { display: flex; flex-direction: column; min-height: calc(100vh - 13px); background: #fff; box-shadow: 2px 2px 6px #555; }

.titlebar { display: flex; align-items: center; height: 40px; padding-left: 5px; background: #222b37; color: #fff; }
.brand-mark { width: 43px; height: 24px; color: #8fd410; }
.titlebar h1 { margin-left: 6px; font: 800 31px/40px "Open Sans", sans-serif; }
.window-title { flex: 1; text-align: center; font-size: 13px; padding-right: 260px; }
.window-controls { display: flex; gap: 36px; padding-right: 17px; }
.window-controls svg { fill: none; stroke: #7b8088; }

.menu { display: flex; height: 23px; padding-left: 1px; align-items: center; font-size: 12px; }
.menu a { padding: 0 6px 0 7px; line-height: 22px; }
.menu .guide { margin-left: 1px; padding: 0 7px 0 6px; background: #8fd410; }

.ribbon { display: flex; height: 77px; padding: 9px 0 1px 1px; }
.ribbon button { flex-direction: column; justify-content: flex-start; color: #333; height: 58px; border-right: 1px solid #c0c0c0; }
.ribbon button:disabled { color: #a0a0a0; }
.ribbon svg { width: 32px; height: 29px; margin-bottom: 5px; color: #0d2230; }
.ribbon .shade { background: #ddd; color: #6e6e6e; width: 26px; }
.ribbon .gold { color: #f0c400; }
.ribbon .blue { color: #0063b0; }
.ribbon .green { color: #00a060; }
.ribbon-apps { display: flex; height: 67px; border-right: 1px solid #d0d0d0; }
.ribbon-apps button { border: 0; }
.caret { border: 2px solid transparent; border-top: 3px solid #000; border-bottom: 0; }
.ribbon .caret { margin-top: 4px; }
.tiny { font: bold 10px "Liberation Sans", sans-serif; fill: #fff; }
.w44 { width: 44px; } .w50 { width: 50px; } .w53 { width: 53px; } .w57 { width: 57px; } .w58 { width: 58px; } .w63 { width: 63px; } .w70 { width: 70px; } .w72 { width: 72px; } .w75 { width: 75px; } .w80 { width: 80px; }

.doc-tabs { display: flex; height: 24px; padding: 3px 0 0 1px; background: #efefef; }
.doc-tab { display: flex; align-items: center; justify-content: space-between; padding: 0 8px 0 11px; background: #fff; color: #000; white-space: nowrap; }
.doc-tab button { width: 8px; color: #666; font: 13px/14px "DejaVu Sans", sans-serif; }
.doc-tab.active { background: #000; color: #fff; }
.doc-tab.active button { color: #fff; }
.t48 { width: 48px; } .t53 { width: 53px; } .t56 { width: 56px; } .t57 { width: 57px; } .t63 { width: 63px; } .t65 { width: 65px; } .t67 { width: 67px; } .t73 { width: 73px; } .t97 { width: 97px; } .t105 { width: 105px; } .t116 { width: 116px; } .t122 { width: 122px; } .t125 { width: 125px; } .t133 { width: 133px; } .t163 { width: 163px; }

.body { display: flex; flex: 1; }
.gutter { width: 26px; background: #efefef; padding-left: 1px; }
.gutter div { height: 90px; background: #fff; padding: 3px 0 0 1px; }
.gutter button { width: 22px; height: 85px; border: 1px solid #555; writing-mode: vertical-rl; color: #000; font: 11px "DejaVu Sans", sans-serif; }
.work { flex: 1; min-width: 0; display: flex; flex-direction: column; padding-right: 1px; }
.sub-tabs { display: flex; height: 24px; padding-top: 3px; color: #000; line-height: 21px; text-align: center; white-space: nowrap; }
.sub-tabs .active { background: #000; color: #fff; }

.tools { display: flex; height: 55px; padding: 5px 0 0 2px; }
.tools section { height: 46px; border-right: 1px solid #c8c8c8; }
.tools section div { display: flex; justify-content: center; align-items: center; height: 36px; }
.tools h2 { font-size: 11px; line-height: 14px; text-align: center; }
.tools button { width: 45px; height: 32px; gap: 5px; }
.tools svg { width: 30px; height: 30px; }
.tools .dim { color: #6e6e6e; }
.g94 { width: 94px; } .g143 { width: 143px; } .g184 { width: 184px; } .g188 { width: 188px; } .g216 { width: 216px; } .g229 { width: 229px; } .g234 { width: 234px; }
.g216 .select { margin: 0 6px 6px 6px; }
.led { width: 12px; height: 12px; border-radius: 6px; background: #3fbf6f; border: 1px solid #2b8a4c; }

.select { position: relative; display: flex; height: 20px; border: 1px solid #a0a0a0; background: #fff; }
.select select { flex: 1; min-width: 0; appearance: none; border: 0; background: none; padding: 0 20px 0 3px; }
.select::after { content: ""; position: absolute; right: 0; top: 0; bottom: 0; width: 17px; border-left: 1px solid #a0a0a0; background: #eee; pointer-events: none; }
.select::before { content: ""; position: absolute; z-index: 1; right: 5px; top: 8px; border: 3px solid transparent; border-top: 4px solid #666; border-bottom: 0; pointer-events: none; }
.w150 { width: 150px; } .w176 { width: 176px; } .w347 { width: 347px; }

.config { display: flex; height: 39px; align-items: flex-start; padding: 9px 0 0 22px; }
.opt { display: flex; align-items: center; gap: 5px; width: 112px; height: 22px; }
.config nav { display: flex; }
.config nav a { padding: 0 9px; font-weight: bold; font-size: 12px; line-height: 22px; border-right: 1px solid #c0c0c0; }
.config nav .active { padding: 0 7px; margin-right: 4px; background: #ddd; border: 0; box-shadow: 4px 0 0 #fff, 5px 0 0 #c0c0c0; }
.cog { width: 36px; height: 24px; margin-left: 2px; border-right: 1px solid #c0c0c0; }
.cog svg { width: 16px; height: 16px; }
.config .select { margin-left: 289px; height: 20px; }

input[type=checkbox] { appearance: none; width: 13px; height: 13px; border: 1px solid #8e8f8f; background: #f4f4f4; box-shadow: inset 0 0 0 1px #fff, inset 0 0 0 2px #c9ccd2; flex: none; display: block; }
.opt input[type=checkbox] { background: #fff; box-shadow: none; }
input[type=checkbox]:checked { background: linear-gradient(#5a6fa8, #5a6fa8) 3px 6px / 3px 3px no-repeat, linear-gradient(120deg, #f4f4f4 50%, #3f5aa0 50%, #3f5aa0 66%, #f4f4f4 66%) 4px 2px / 6px 7px no-repeat, #f4f4f4; }
input.mixed { background: #2f8fc8; box-shadow: inset 0 0 0 1px #fff, inset 0 0 0 2px #17506e; }

.formula { display: flex; align-items: center; height: 31px; padding: 0 30px 1px 19px; }
.formula button { width: 30px; }
.formula button svg { width: 20px; height: 22px; }
.formula button:first-child svg { width: 25px; height: 25px; }
.expr { width: 496px; height: 20px; margin: 0 25px 0 -1px; border: 1px solid #ddd; border-top: 2px solid #777; border-left: 2px solid #777; padding: 0 2px; color: #666; }
.grow { flex: 1; margin-left: 4px; }

.grid-box { border: 1px solid #646464; }
.grid-view { display: flex; }
.grid-clip { flex: 1; min-width: 0; overflow: hidden; position: relative; }
table { border-collapse: separate; border-spacing: 0; table-layout: fixed; }
.grid { width: 100%; }
.c13 { width: 13px; } .c15 { width: 15px; } .c19 { width: 19px; } .c25 { width: 25px; } .c31 { width: 31px; } .c33 { width: 33px; } .c36 { width: 36px; } .c50 { width: 50px; } .c52 { width: 52px; } .c68 { width: 68px; } .c86 { width: 86px; } .c90 { width: 91px; } .c92 { width: 92px; } .c100 { width: 100px; } .c101 { width: 101px; } .c107 { width: 107px; } .c117 { width: 117px; } .c135 { width: 135px; } .c146 { width: 146px; } .c175 { width: 175px; } .c260 { width: 260px; } .c303 { width: 303px; }
th { height: 20px; padding: 0; background: #222b37; color: #fff; border-right: 1px solid #fff; white-space: nowrap; overflow: hidden; text-align: center; font-weight: bold; line-height: 18px; }
.grid th:last-child { border-right: 0; }
th.cyan { color: #27b0ee; } th.amber { color: #f07d28; } th.olive { color: #a87c1c; } th.pink { color: #f0408a; }
.grid td { height: 20px; padding: 0; vertical-align: bottom; line-height: 19px; white-space: nowrap; color: #000; border-bottom: 1px solid #eef0f4; }
.grid td:nth-child(4), .grid td:nth-child(6), .grid td.id { padding-left: 3px; }
.grid .edits td:nth-child(6) { padding-left: 3px; }
.grid .edits td:nth-child(5), .grid .edits td:nth-child(7) { padding-left: 0; }
.grid td.id { border-right: 1px solid #666; }
.grid td.id .y { text-align: left; margin-left: -3px; padding-left: 3px; }
.grid .l2 td { color: #fff; background: #356b8f; border-bottom-color: #fff; }
.grid .l3 td { background: #c8cad5; }
.grid .l4 td { background: #d8dbe2; }
.grid .l5 td { background: #e8e9ee; }
.grid .l6 td { background: #f6f7f8; }
.grid .tall td { height: 36px; }
.grid .cut td { height: 29px; }
.grid .sliver td { height: 5px; border-bottom: 0; }
.grid .b { font-weight: bold; }
.y { background: #f0c400; color: #000; height: 19px; text-align: center; }
.y input { margin: 0 auto; position: relative; top: 3px; }
.ed input { margin: 0 auto 3px; }
.cp svg { display: block; width: 14px; height: 16px; margin: 0 auto 2px; }
.cp .y { padding-top: 2px; }
.cp .y svg { margin-bottom: 0; }
.ty svg { display: block; width: 19px; height: 18px; margin: 0 0 0 9px; }
.grid td.n { text-align: right; padding-right: 3px; }
.q span { display: inline-block; width: 98px; margin-right: 6px; text-align: right; }
.pk span { display: flex; justify-content: flex-end; width: 10px; overflow: hidden; margin-left: 1px; color: #f0408a; }
.ps { display: flex; align-items: flex-end; }
.p { display: flex; flex-direction: column; }
.p small { font: 10px/16px "Liberation Sans", sans-serif; text-align: center; }
.p p { display: flex; gap: 6px; height: 19px; background: #fcf7e1; color: #000; position: relative; }
.p p > :nth-last-child(2) { text-align: right; }
.p.hot p { background: #f0c400; }
.p1 { width: 143px; } .p2 { width: 116px; } .p3 { width: 98px; } .p4 { width: 121px; } .p5 { width: 108px; }
.p1 p > :nth-last-child(2) { width: 82px; } .p2 p > :nth-last-child(2) { width: 57px; } .p3 p > :nth-last-child(2) { width: 47px; } .p4 p > :nth-last-child(2) { width: 57px; } .p5 p > :nth-last-child(2) { width: 55px; }
.cut .p small { height: 9px; line-height: 4px; overflow: hidden; }
.mark { position: absolute; left: 2px; top: 5px; width: 16px; height: 10px; color: #ff7f00; }
.current { position: relative; }
.current td:first-child::after { content: ""; position: absolute; left: 0; right: 0; top: 17px; bottom: 0; border: solid #000; border-width: 2px 0; pointer-events: none; }
.tree { position: absolute; left: 0; top: 20px; }

.vscroll { width: 17px; background: #f0f0f0; border-left: 1px solid #fff; display: flex; flex-direction: column; align-items: center; padding: 7px 0 6px; }
.vthumb { width: 14px; height: 126px; margin: 18px 0 auto; background: #cdcdcd; }
.hscroll { display: flex; align-items: center; height: 17px; padding: 0 6px; background: #f0f0f0; border-top: 1px solid #fff; }
.hthumb { height: 16px; background: #cdcdcd; margin: 0 auto 0 5px; }
.hthumb.main { width: 78%; }
.hthumb.side { width: 491px; }
.chev { width: 6px; height: 6px; border: solid #505050; border-width: 2px 0 0 2px; flex: none; }
.chev.up { transform: rotate(45deg); } .chev.down { transform: rotate(225deg); } .chev.left { transform: rotate(-45deg); } .chev.right { transform: rotate(135deg); }

.settings { margin-top: 6px; flex: 1; display: flex; flex-direction: column; position: relative; border-right: 1px solid #000; }
.bar { display: flex; justify-content: space-between; align-items: center; height: 17px; margin: 0 3px; padding: 0 4px 0 1px; background: #9ab3d0; color: #000; font-size: 11px; }
.model { margin: 1px 13px 0 11px; height: 49px; }
.row { display: flex; align-items: center; }
.model .row { padding: 5px 0 0 8px; height: 28px; }
.model input { height: 19px; border: 1px solid #a9b4c2; background: #eee; color: #000; padding: 0 1px; }
.model .item { width: 324px; margin-left: 6px; white-space: pre; }
.model .assoc { margin-left: 8px; width: 88px; white-space: nowrap; }
.model .model-name { width: 303px; }
.raised { width: 25px; height: 23px; margin-left: 6px; background: #fff; border: solid #000; border-width: 0 2px 2px 0; }
.raised svg { width: 18px; height: 18px; }
.raised.x { margin-left: 2px; color: #333; }
.go { width: 26px; margin: 0 19px 0 6px; }
.go svg, .move svg { width: 26px; height: 22px; }

.columns { display: flex; flex: 1; margin-top: 4px; padding-left: 12px; }
.group { display: flex; flex-direction: column; margin: 2px 0 18px; }
.group legend { margin-left: -6px; }
.list { width: 637px; padding: 0 6px 5px 10px; }
.items { flex: 1; padding: 9px 8px 5px 9px; margin-left: 8px; margin-right: 20px; }
.tabs { display: flex; color: #000; }
.list .tabs { margin: 5px 0 0 5px; line-height: 20px; }
.tabs a { padding: 0 7px; border-right: 1px solid #555; }
.list .tabs a { padding: 0 8px; }
.tabs .active { background: #000; color: #fff; border: 0; }
.strip { display: flex; align-items: center; height: 34px; padding-left: 0; border: 1px solid #ddd; border-top: 2px solid #777; border-left: 2px solid #777; background: #fff; }
.strip button { width: 33px; }
.strip.tight { padding-left: 2px; }
.strip.tight button, .strip.wide button { width: 32px; }
.strip svg { width: 20px; height: 20px; }
.strip svg.s { width: 17px; height: 17px; }
.ab { font: 13px "Liberation Serif", serif; }
.fx, .quote { font: italic 18px "Liberation Serif", serif; }
.quote { font-style: normal; font-size: 16px; padding-bottom: 6px; }
.strip .push { margin-left: 4px; }
.table-box { flex: 1; display: flex; flex-direction: column; margin-top: 2px; border: 1px solid #666; background: #ababab; }
.items .table-box { margin-top: 1px; }
.table-box .hscroll { margin-top: auto; }
.mini { width: 812px; border-bottom: 1px solid #777; }
.mini.full { width: 100%; }
.mini td { height: 20px; padding: 0 3px; border-right: 1px solid #fff; background: #fff; color: #000; line-height: 19px; white-space: nowrap; overflow: hidden; }
.mini .rh { background: #f0f0f0; border-right: 1px solid #a0a0a0; border-bottom: 1px solid #a0a0a0; }
.lined td { border-right-color: #eee; border-bottom: 1px solid #eee; }
.mini .filter-row td:not(.rh) { background: #ddf4f1; border-color: #ddf4f1; }
.mini .sel td:not(.rh) { background: #0078d9; color: #fff; }
.mini td:last-child, .mini th:last-child { border-right: 0; }
.mini .c input { margin: 0 auto; }
.mini .r { text-align: right; }
.mini .r input { margin-left: 15px; }
.mini .cream { background: #fcf7e1; }
.mini .current td { overflow: visible; }
.mini .current td:first-child::after { top: 0; left: 19px; }
.clip span { display: flex; justify-content: center; overflow: hidden; }
.move { width: 46px; padding: 79px 0 0 11px; }
.move button { color: #666; margin-bottom: 18px; }
.splitter { width: 4px; margin-bottom: 4px; background: #3b6ea5; }

.detail { width: 470px; margin-right: 11px; padding-top: 6px; display: flex; flex-direction: column; }
.detail .tabs { padding-left: 6px; line-height: 21px; text-align: center; }
.detail .tabs a { padding: 0; }
.detail-frame { flex: 1; margin-bottom: 6px; padding: 20px 7px 4px 6px; border: solid #000; border-width: 0 1px 1px 0; }
.detail-inner { display: flex; height: 100%; border: 1px solid #a0a0a0; padding: 17px 13px 0 15px; }
.send { align-self: flex-start; margin-top: 88px; width: 20px; }
.send svg { width: 17px; height: 16px; }
.form { flex: 1; margin-left: 21px; }
.field { display: flex; margin: 0 0 5px 2px; align-items: center; }
.field label { width: 70px; }
.field input { flex: 1; height: 19px; background: #ccd7ef; border: solid #a0a0a0; border-width: 1px 0 0 1px; padding: 0 2px; color: #444; }
.value { margin: 5px 24px 0 3px; height: 59px; }
.value legend { margin-left: 6px; }
.value .row { height: 22px; padding-left: 14px; margin-top: -1px; }
.value .row + .row { margin-top: 0; }
.value label { display: flex; align-items: center; gap: 6px; width: 80px; }
.value label input { width: 12px; height: 12px; accent-color: #222; }
.value .amount, .value .unit { height: 19px; border: 1px solid #a0a0a0; color: #000; padding: 0 1px; background: #fff; }
.value .amount { width: 132px; margin-right: 13px; }
.value .amount[readonly] { background: #eee; }
.value .unit { width: 88px; }
.dots { width: 20px; height: 19px; background: #f0f0f0; border: solid #666; border-width: 0 2px 2px 0; color: #000; }
.dots:disabled { color: #999; }
.form .strip { height: 31px; margin-top: 5px; }
.form textarea { display: block; width: 100%; height: 139px; margin-top: 3px; padding: 2px; resize: none; background: #ccd7ef; border: 1px solid #ddd; border-top: 2px solid #777; border-left: 2px solid #777; color: #000; }

.notes { position: absolute; left: 0; top: 0; width: 100%; height: 100%; pointer-events: none; fill: #8b0000; }
.notes text { fill: #fff; font: 15px "Liberation Sans", sans-serif; text-anchor: middle; }

.bottom-tabs { display: flex; height: 25px; border-top: 1px solid #000; line-height: 22px; color: #555; text-align: center; white-space: nowrap; }
.bottom-tabs a + a + a { border-right: 1px solid #555; height: 20px; margin-top: 2px; line-height: 20px; }
.bottom-tabs .active { height: 23px; margin-top: -1px; line-height: 24px; background: #fff; border: solid #000; border-width: 0 1px 1px 0; }
```
